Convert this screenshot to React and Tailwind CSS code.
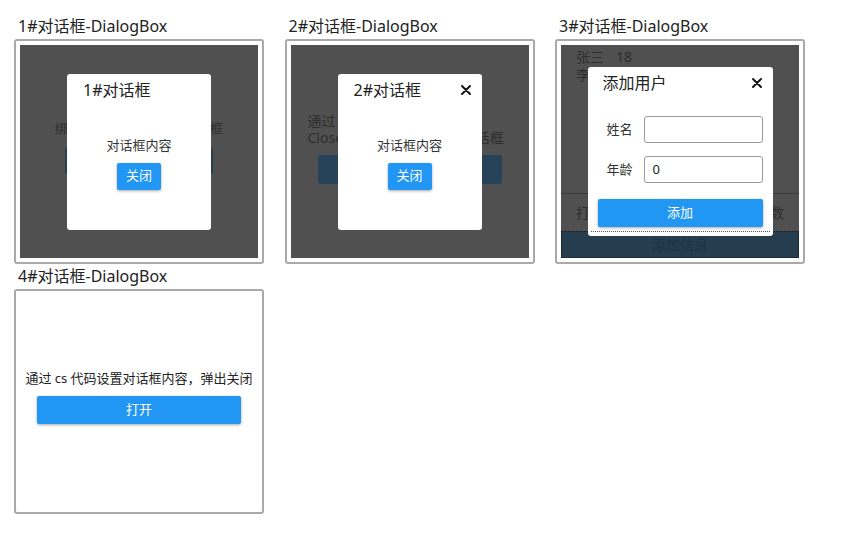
import React from "react";

const FONT = "font-['Noto_Sans','Noto_Sans_CJK_SC',sans-serif]";

function CloseX({ className = "" }) {
  return (
    <svg width="10" height="10" viewBox="0 0 10 10" className={className}>
      <path d="M1 1L9 9M9 1L1 9" stroke="#111" strokeWidth="1.9" strokeLinecap="round" />
    </svg>
  );
}

function BlueButton({ className = "", children }) {
  return (
    <div
      className={`flex items-center justify-center bg-[#2196f3] text-white text-[13px] rounded-[2px] shadow-[0_1px_3px_rgba(0,0,0,0.35)] ${className}`}
    >
      {children}
    </div>
  );
}

function Panel({ title, children }) {
  return (
    <div className="flex flex-col">
      <div className="h-[25px] flex items-center pl-[4px] pb-[2px] text-[16px] text-[#222]">{title}</div>
      <div className="h-[225px] border-2 border-[#a9a9a9] rounded-[3px] p-[4px] bg-white">{children}</div>
    </div>
  );
}

function SimpleDialog({ title, closable }) {
  return (
    <div className="w-[144px] h-[156px] bg-white rounded-[3px] flex flex-col">
      <div className="h-[32px] flex items-center justify-between pl-[16px] pr-[11px] text-[16px] text-[#222]">
        <span>{title}</span>
        {closable && <CloseX />}
      </div>
      <div className="flex flex-col items-center pt-[30px]">
        <div className="text-[13px] leading-[18px] text-[#333]">对话框内容</div>
        <BlueButton className="mt-[9px] h-[27px] w-[44px]">关闭</BlueButton>
      </div>
    </div>
  );
}

function Panel1() {
  return (
    <div className="relative h-full bg-[#505050] overflow-hidden">
      <div className="h-full flex flex-col items-center pt-[74px] text-[13px] text-[#2e2e2e]">
        <div className="leading-[18px] whitespace-nowrap">绑定 IsOpen 属性打开对话框</div>
        <div className="mt-[11px] h-[26px] w-[148px] bg-[#283f52] rounded-[2px]" />
      </div>
      <div className="absolute inset-0 flex items-center justify-center">
        <SimpleDialog title="1#对话框" />
      </div>
    </div>
  );
}

function Panel2() {
  return (
    <div className="relative h-full bg-[#505050] overflow-hidden">
      <div className="h-full flex flex-col pt-[67px] px-[17px] text-[14px] text-[#2e2e2e]">
        <div className="leading-[17px] whitespace-nowrap">通过 ShowCloseButton</div>
        <div className="leading-[17px] whitespace-nowrap">CloseButton 点击后关闭对话框</div>
        <div className="mt-[9px] mx-[10px] h-[29px] bg-[#27435a] rounded-[2px]" />
      </div>
      <div className="absolute inset-0 flex items-center justify-center">
        <SimpleDialog title="2#对话框" closable />
      </div>
    </div>
  );
}

function Input({ value }) {
  return (
    <div className="h-[27px] w-[119px] border border-[#9a9a9a] rounded-[3px] bg-white flex items-center px-[8px] text-[13px] text-[#222]">
      {value}
    </div>
  );
}

function Panel3() {
  return (
    <div className="relative h-full bg-[#505050] overflow-hidden">
      <div className="h-full flex flex-col text-[14px] text-[#2e2e2e]">
        <div className="pl-[15px] pt-[3px]">
          <div className="leading-[18px] flex gap-[12px]">
            <span>张三</span>
            <span>18</span>
          </div>
          <div className="leading-[18px] flex gap-[12px]">
            <span>李四</span>
            <span>20</span>
          </div>
        </div>
        <div className="flex-1" />
        <div className="border-t border-[#3a3a3a]" />
        <div className="h-[37px] flex items-center px-[15px] justify-between whitespace-nowrap">
          <span>打开对话框添加信息</span>
          <span>当前人数</span>
        </div>
        <div className="h-[27px] bg-[#263d50] border border-dotted border-[#1a1a1a] flex items-center justify-center text-[#1d3243] text-[14px]">
          添加信息
        </div>
      </div>
      <div className="absolute inset-0 flex items-center justify-center">
        <div className="w-[185px] h-[169px] bg-white rounded-[3px] flex flex-col">
          <div className="h-[32px] flex items-center justify-between pl-[15px] pr-[11px] text-[16px] text-[#222]">
            <span>添加用户</span>
            <CloseX />
          </div>
          <div className="flex items-center pl-[19px] pr-[10px] mt-[17px] justify-between">
            <span className="text-[13px] text-[#333]">姓名</span>
            <Input value="" />
          </div>
          <div className="flex items-center pl-[19px] pr-[10px] mt-[13px] justify-between">
            <span className="text-[13px] text-[#333]">年龄</span>
            <Input value="0" />
          </div>
          <BlueButton className="mx-[10px] mt-[16px] h-[28px]">添加</BlueButton>
          <div className="mt-[4px] mx-[3px] border-t border-dotted border-[#555]" />
        </div>
      </div>
    </div>
  );
}

function Panel4() {
  return (
    <div className="h-full flex flex-col items-center justify-center pb-[10px]">
      <div className="text-[13px] leading-[18px] text-[#222] whitespace-nowrap">通过 cs 代码设置对话框内容，弹出关闭</div>
      <BlueButton className="mt-[9px] h-[28px] w-[204px]">打开</BlueButton>
    </div>
  );
}

export default function App() {
  return (
    <div className={`w-[850px] h-[535px] bg-white pl-[14px] pt-[14px] ${FONT}`}>
      <div className="grid grid-cols-[250px_250px_250px] gap-x-[20.5px]">
        <Panel title="1#对话框-DialogBox">
          <Panel1 />
        </Panel>
        <Panel title="2#对话框-DialogBox">
          <Panel2 />
        </Panel>
        <Panel title="3#对话框-DialogBox">
          <Panel3 />
        </Panel>
        <Panel title="4#对话框-DialogBox">
          <Panel4 />
        </Panel>
      </div>
    </div>
  );
}
